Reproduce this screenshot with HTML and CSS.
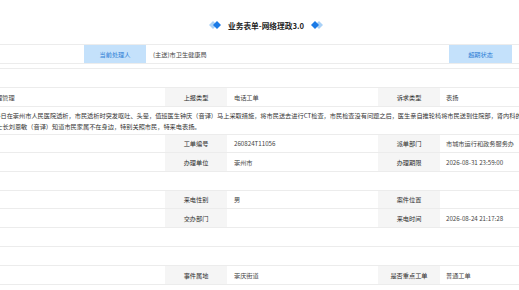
FILE: index.html
```html
<!DOCTYPE html>
<html lang="zh-CN">
<head>
    <meta charset="UTF-8">
    <meta name="viewport" content="width=device-width, initial-scale=1.0">
    <title>业务表单-网络理政3.0</title>
    <link rel="stylesheet" href="styles.css">
</head>
<body>

    <div class="title">
        <svg class="mark" width="12" height="8" viewBox="0 0 12 8">
            <polygon points="4,0 8,4 4,8 0,4" fill="#a9d1f7"/>
            <polygon points="8,0 12,4 8,8 4,4" fill="#1a7ae6"/>
        </svg>
        <h2>业务表单-网络理政3.0</h2>
        <svg class="mark" width="12" height="8" viewBox="0 0 12 8">
            <polygon points="8,0 12,4 8,8 4,4" fill="#a9d1f7"/>
            <polygon points="4,0 8,4 4,8 0,4" fill="#1a7ae6"/>
        </svg>
    </div>

    <div class="sheet">
        <div class="row row-head">
            <div class="spacer"></div>
            <div class="label label-blue">当前处理人</div>
            <div class="val val-wide">(主送)市卫生健康局</div>
            <div class="label label-blue label-last">超期状态</div>
            <div class="val"></div>
        </div>
    </div>

    <div class="sheet sheet-main">
        <div class="row"></div>
        <div class="row">
            <div class="val val-first">护理管理</div>
            <div class="label">上报类型</div>
            <div class="val val-mid">电话工单</div>
            <div class="label">诉求类型</div>
            <div class="val val-end">表扬</div>
        </div>
        <div class="row row-text">
            <p class="desc">8月24日在崇州市人民医院透析，市民透析时突发呕吐、头晕，值班医生钟庆（音译）马上采取措施，将市民送去进行CT检查，市民检查没有问题之后，医生亲自推轮椅将市民送到住院部，肾内科的护士都很热情，<br>的护士长刘恩敏（音译）知道市民家属不在身边，特别关照市民，特来电表扬。</p>
        </div>
        <div class="row row-short">
            <div class="val val-first"></div>
            <div class="label">工单编号</div>
            <div class="val val-mid">260824T11056</div>
            <div class="label">派单部门</div>
            <div class="val val-end">市城市运行和政务服务办</div>
        </div>
        <div class="row">
            <div class="val val-first"></div>
            <div class="label">办理单位</div>
            <div class="val val-mid">崇州市</div>
            <div class="label">办理期限</div>
            <div class="val val-end">2026-08-31 23:59:00</div>
        </div>
        <div class="row"></div>
        <div class="row row-short">
            <div class="val val-first"></div>
            <div class="label">来电性别</div>
            <div class="val val-mid">男</div>
            <div class="label">案件位置</div>
            <div class="val val-end"></div>
        </div>
        <div class="row">
            <div class="val val-first"></div>
            <div class="label">交办部门</div>
            <div class="val val-mid"></div>
            <div class="label">来电时间</div>
            <div class="val val-end">2026-08-24 21:17:28</div>
        </div>
        <div class="row"></div>
        <div class="row"></div>
        <div class="row">
            <div class="val val-first"></div>
            <div class="label">事件属地</div>
            <div class="val val-mid">崇庆街道</div>
            <div class="label">是否重点工单</div>
            <div class="val val-end">普通工单</div>
        </div>
        <div class="row"></div>
    </div>

</body>
</html>
```

FILE: styles.css
```css
* {
    box-sizing: border-box;
}
body {
    margin: 0;
    overflow: hidden;
    background-color: #ffffff;
    font-family: "Noto Sans CJK SC", "Liberation Sans", sans-serif;
    font-size: 6.2px;
    color: #444;
}
.title {
    height: 44px;
    padding-left: 13px;
    display: flex;
    align-items: center;
    justify-content: center;
    gap: 7px;
    padding-top: 6px;
}
.title h2 {
    margin: 0;
    font-size: 7.7px;
    font-weight: bold;
    color: #1f1f1f;
}
.mark {
    display: block;
}
.sheet {
    margin-left: -24px;
    border-top: 1px solid #ececec;
}
.sheet-main {
    margin-top: 4px;
}
.row {
    display: flex;
    height: 19px;
    border-bottom: 1px solid #ececec;
}
.row-head {
    height: 19px;
}
.row-short {
    height: 18px;
}
.row-text {
    height: 28px;
}
.spacer {
    width: 108px;
}
.label {
    width: 62px;
    display: flex;
    align-items: center;
    justify-content: center;
    background-color: #f5f5f5;
    color: #2b2b2b;
}
.label-blue {
    background-color: #c4e1fb;
    color: #2f7fd6;
}
.label-last {
    width: 63px;
}
.val {
    display: flex;
    align-items: center;
    padding-left: 7px;
    white-space: nowrap;
    overflow: hidden;
}
.val-wide {
    width: 303px;
}
.val-first {
    width: 189px;
    padding-left: 14px;
}
.val-mid {
    width: 151px;
}
.val-end {
    flex: 1;
    padding-left: 6px;
}
.desc {
    margin: 0;
    padding: 3px 0 0 8px;
    line-height: 11px;
    white-space: nowrap;
    color: #333;
}
```
